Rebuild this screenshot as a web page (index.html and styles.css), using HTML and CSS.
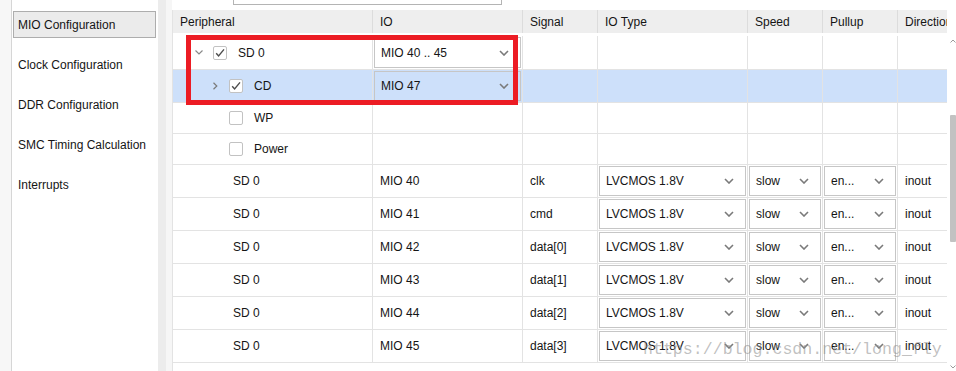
FILE: index.html
```html
<!DOCTYPE html>
<html lang="en">
<head>
  <meta charset="UTF-8">
  <title>MIO Configuration</title>
  <link rel="stylesheet" href="styles.css">
</head>
<body>
  <div class="app">
    <div class="edge"></div>

    <!-- Page navigation -->
    <nav class="sidebar">
      <div class="nav-item active">MIO Configuration</div>
      <div class="nav-item">Clock Configuration</div>
      <div class="nav-item">DDR Configuration</div>
      <div class="nav-item">SMC Timing Calculation</div>
      <div class="nav-item">Interrupts</div>
    </nav>

    <div class="splitter"></div>

    <main class="main">
      <div class="toolbar"><div class="search"></div></div>

      <div class="grid-wrap">
        <div class="grid">
          <div class="row head">
            <div class="cell">Peripheral</div>
            <div class="cell">IO</div>
            <div class="cell">Signal</div>
            <div class="cell">IO Type</div>
            <div class="cell">Speed</div>
            <div class="cell">Pullup</div>
            <div class="cell">Direction</div>
          </div>

          <div class="rows">
            <div class="row tall">
              <div class="cell tree">
                <span class="twisty"><svg width="8" height="5" viewBox="0 0 8 5"><path d="M0.5 0.5 L4 4 L7.5 0.5" fill="none" stroke="#8a8a8a" stroke-width="1.2"/></svg></span>
                <span class="check on"><svg width="12" height="12" viewBox="0 0 12 12"><path d="M2.2 6.2 L4.6 9 L10 2.4" fill="none" stroke="#4d4d4d" stroke-width="1.4"/></svg></span>
                SD 0
              </div>
              <div class="cell"><div class="select white">MIO 40 .. 45<svg class="chev" width="10" height="6" viewBox="0 0 10 6"><path d="M1 1 L5 5 L9 1" fill="none" stroke="#7a7a7a" stroke-width="1.6"/></svg></div></div>
              <div class="cell"></div><div class="cell"></div><div class="cell"></div><div class="cell"></div><div class="cell"></div>
            </div>

            <div class="row data selected">
              <div class="cell tree level2">
                <span class="twisty"><svg width="8" height="8" viewBox="0 0 8 8"><path d="M2.5 0.8 L5.8 4 L2.5 7.2" fill="none" stroke="#7a7a7a" stroke-width="1.2"/></svg></span>
                <span class="check on"><svg width="12" height="12" viewBox="0 0 12 12"><path d="M2.2 6.2 L4.6 9 L10 2.4" fill="none" stroke="#4d4d4d" stroke-width="1.4"/></svg></span>
                CD
              </div>
              <div class="cell"><div class="select">MIO 47<svg class="chev" width="10" height="6" viewBox="0 0 10 6"><path d="M1 1 L5 5 L9 1" fill="none" stroke="#7a7a7a" stroke-width="1.6"/></svg></div></div>
              <div class="cell"></div><div class="cell"></div><div class="cell"></div><div class="cell"></div><div class="cell"></div>
            </div>

            <div class="row short">
              <div class="cell tree level2"><span class="twisty"></span><span class="check"></span>WP</div>
              <div class="cell"></div><div class="cell"></div><div class="cell"></div><div class="cell"></div><div class="cell"></div><div class="cell"></div>
            </div>

            <div class="row short">
              <div class="cell tree level2"><span class="twisty"></span><span class="check"></span>Power</div>
              <div class="cell"></div><div class="cell"></div><div class="cell"></div><div class="cell"></div><div class="cell"></div><div class="cell"></div>
            </div>
          </div>
          <div class="rows" id="pinRows"></div>
        </div>

        <div class="scrollbar">
          <svg class="arrow" width="6" height="4" viewBox="0 0 6 4"><path d="M0.5 3.5 L3 1 L5.5 3.5" fill="none" stroke="#9a9a9a" stroke-width="1"/></svg>
          <div class="thumb"></div>
          <svg class="arrow down" width="6" height="4" viewBox="0 0 6 4"><path d="M0.5 0.5 L3 3 L5.5 0.5" fill="none" stroke="#9a9a9a" stroke-width="1"/></svg>
        </div>
      </div>
    </main>

    <div class="highlight"></div>
    <div class="watermark">https://blog.csdn.net/long_fly</div>
  </div>

  <script>
    // Pin rows of the SD 0 peripheral
    const pins = [
      ['MIO 40', 'clk'],
      ['MIO 41', 'cmd'],
      ['MIO 42', 'data[0]'],
      ['MIO 43', 'data[1]'],
      ['MIO 44', 'data[2]'],
      ['MIO 45', 'data[3]']
    ];
    const chev = '<svg class="chev" width="10" height="6" viewBox="0 0 10 6"><path d="M1 1 L5 5 L9 1" fill="none" stroke="#7a7a7a" stroke-width="1.6"/></svg>';
    const pinRows = document.getElementById('pinRows');

    pins.forEach(pin => {
      const row = document.createElement('div');
      row.className = 'row data';
      row.innerHTML =
        `<div class="cell pin">SD 0</div>` +
        `<div class="cell">${pin[0]}</div>` +
        `<div class="cell">${pin[1]}</div>` +
        `<div class="cell"><div class="select white">LVCMOS 1.8V${chev}</div></div>` +
        `<div class="cell"><div class="select white">slow${chev}</div></div>` +
        `<div class="cell"><div class="select white">en...${chev}</div></div>` +
        `<div class="cell">inout</div>`;
      pinRows.appendChild(row);
    });
  </script>
</body>
</html>
```

FILE: styles.css
```css
/* Variables */
:root {
  --text-color: #151515;
  --line-color: #e3e3e3;
  --head-bg: #eeeeee;
  --select-border: #c6c6c6;
  --selected-bg: #cde0fa;
  --red: #ec1c24;
}

/* General */
body {
  margin: 0;
  font-family: 'Liberation Sans', Arial, sans-serif;
  font-size: 12px;
  color: var(--text-color);
  background: #fff;
}

.app {
  position: relative;
  display: flex;
  width: 956px;
  height: 371px;
  overflow: hidden;
}

.edge {
  width: 11px;
  background-color: #f7f7f7;
  border-right: 1px solid #d6d6d6;
}

/* Sidebar */
.sidebar {
  width: 146px;
  padding: 11px 2px 0 1px;
  box-sizing: border-box;
  background: #fff;
}

.nav-item {
  height: 27px;
  line-height: 26px;
  padding-left: 4px;
  margin-bottom: 13px;
  border: 1px solid transparent;
  box-sizing: border-box;
  white-space: nowrap;
}

.nav-item.active {
  background-color: #ebebeb;
  border-color: #adadad;
}

.splitter {
  width: 14px;
  background: linear-gradient(to right, #ececec 0, #ececec 8px, #f6f6f6 8px);
}

/* Main area */
.main {
  flex: 1;
  display: flex;
  flex-direction: column;
  min-width: 0;
}

.toolbar {
  height: 10px;
}

.search {
  margin-left: 61px;
  width: 267px;
  height: 4px;
  border: 1px solid #b4b4b4;
  border-top: none;
}

.grid-wrap {
  flex: 1;
  display: flex;
  min-height: 0;
}

.grid {
  width: 775px;
  overflow: hidden;
  border-left: 1px solid var(--line-color);
  box-sizing: border-box;
}

.row {
  display: grid;
  grid-template-columns: 200px 150px 75px 150px 75px 75px 100px;
  width: 825px;
  box-sizing: border-box;
}

.cell {
  display: flex;
  align-items: center;
  padding-left: 7px;
  border-right: 1px solid var(--line-color);
  box-sizing: border-box;
  white-space: nowrap;
  min-width: 0;
}

.row.head {
  height: 23px;
  background-color: var(--head-bg);
  margin-bottom: 3px;
}

.row.head .cell {
  border-right-color: #dcdcdc;
}

.rows:first-of-type {
  border-top: 1px solid var(--line-color);
}

.rows .row {
  border-bottom: 1px solid var(--line-color);
}

.row.tall { height: 34px; }
.row.data { height: 33px; }
.row.short { height: 31px; }

.row.selected {
  background-color: var(--selected-bg);
}

/* Tree column */
.cell.tree {
  padding-left: 22px;
}

.cell.tree.level2 {
  padding-left: 38px;
}

.twisty {
  width: 8px;
  height: 8px;
  display: flex;
  align-items: center;
  justify-content: center;
  margin-right: 10px;
}

.check {
  width: 14px;
  height: 14px;
  border: 1px solid #c2c2c2;
  border-radius: 2px;
  background: #fff;
  box-sizing: border-box;
  margin-right: 11px;
  display: flex;
  align-items: center;
  justify-content: center;
}

.cell.pin {
  padding-left: 60px;
}

/* Dropdowns */
.cell:has(.select) {
  padding: 1px;
  align-items: stretch;
}

.select {
  flex: 1;
  display: flex;
  align-items: center;
  justify-content: space-between;
  padding: 0 11px 0 6px;
  border: 1px solid var(--select-border);
}

.select.white {
  background: #fff;
}

.chev {
  flex-shrink: 0;
}

/* Scrollbar */
.scrollbar {
  width: 9px;
  background: #fff;
  display: flex;
  flex-direction: column;
  align-items: flex-start;
  padding-top: 29px;
  box-sizing: border-box;
}

.arrow {
  margin-left: 3px;
}

.thumb {
  width: 6px;
  height: 127px;
  margin: 72px 0 0 3px;
  background-color: #c2c2c2;
  border-radius: 1px;
}

.arrow.down {
  margin-top: 123px;
}

/* Annotation overlays */
.highlight {
  position: absolute;
  left: 186px;
  top: 35px;
  width: 332px;
  height: 70px;
  border: 5px solid var(--red);
  box-sizing: border-box;
}

.watermark {
  position: absolute;
  left: 643px;
  top: 340px;
  font-family: 'Liberation Mono', monospace;
  font-size: 16.6px;
  color: rgba(140, 140, 140, 0.55);
  pointer-events: none;
}
```
